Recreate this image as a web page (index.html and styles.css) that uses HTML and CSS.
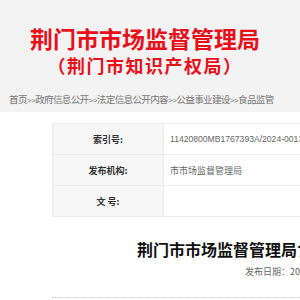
FILE: index.html
```html
<!DOCTYPE html>
<html lang="zh-CN">

<head>
    <meta charset="UTF-8">
    <meta name="viewport" content="width=device-width, initial-scale=1.0">
    <title>荆门市市场监督管理局</title>
    <link rel="stylesheet" href="styles.css">
</head>

<body>
    <div class="topBand">
        <div class="logoArea">
            <h1 class="siteName">荆门市市场监督管理局</h1>
            <h2 class="siteSub">（荆门市知识产权局）</h2>
        </div>
        <div class="crumbs">首页<span class="arr">&gt;&gt;</span>政府信息公开<span class="arr">&gt;&gt;</span>法定信息公开内容<span class="arr">&gt;&gt;</span>公益事业建设<span class="arr">&gt;&gt;</span>食品监管</div>
    </div>

    <div class="mainBox">
        <table class="infoTable">
            <tr>
                <th>索引号:</th>
                <td class="num">11420800MB1767393A/2024-00136</td>
            </tr>
            <tr>
                <th>发布机构:</th>
                <td>市市场监督管理局</td>
            </tr>
            <tr>
                <th>文 号:</th>
                <td></td>
            </tr>
        </table>

        <div class="article">
            <h3 class="artTitle">荆门市市场监督管理局食品安全抽检信息公告</h3>
            <p class="artDate">发布日期：2024-05-20</p>
            <div class="dotLine"></div>
        </div>
    </div>
</body>

</html>
```

FILE: styles.css
```css
html,
body {
    margin: 0;
    padding: 0;
    overflow: hidden;
}

body {
    background-color: #fff;
    font-family: "Noto Sans CJK SC", "Liberation Sans", sans-serif;
    width: 300px;
}

.topBand {
    background-color: #f3f3f3;
    height: 112px;
    overflow: hidden;
}

.logoArea {
    padding-top: 25px;
    padding-left: 25px;
    width: 240px;
    text-align: center;
}

.siteName {
    margin: 0;
    font-size: 23px;
    line-height: 27px;
    color: #e8101a;
    font-weight: bold;
    white-space: nowrap;
}

.siteSub {
    margin: 3px 0 0 0;
    font-size: 18px;
    line-height: 20px;
    color: #e8101a;
    font-weight: bold;
    white-space: nowrap;
    letter-spacing: 1.5px;
}

.crumbs {
    margin-top: 17px;
    padding-left: 9px;
    font-size: 9.6px;
    line-height: 14px;
    color: #777;
    white-space: nowrap;
    letter-spacing: -0.7px;
}

.crumbs .arr {
    font-family: "Liberation Sans", sans-serif;
    font-size: 8px;
    letter-spacing: -0.5px;
}

.mainBox {
    width: 700px;
    padding-left: 52px;
    padding-top: 11px;
}

.infoTable {
    border-collapse: collapse;
    width: 600px;
    font-size: 9px;
}

.infoTable th,
.infoTable td {
    border: 1px solid #ececec;
    height: 30px;
    padding: 0;
}

.infoTable th {
    width: 110px;
    background-color: #f6f6f6;
    color: #333;
    font-weight: bold;
    text-align: center;
}

.infoTable td {
    padding-left: 6px;
    color: #666;
    text-align: left;
}

.infoTable td.num {
    font-family: "Liberation Sans", sans-serif;
    font-size: 8.6px;
}

.article {
    width: 600px;
}

.artTitle {
    margin: 21px 0 0 85px;
    font-size: 16px;
    line-height: 22px;
    color: #111;
    font-weight: bold;
    white-space: nowrap;
}

.artDate {
    margin: 6px 0 0 193px;
    font-size: 9px;
    line-height: 12px;
    color: #666;
    white-space: nowrap;
}

.dotLine {
    margin-top: 19px;
    border-top: 1px dotted #ccc;
}
```
